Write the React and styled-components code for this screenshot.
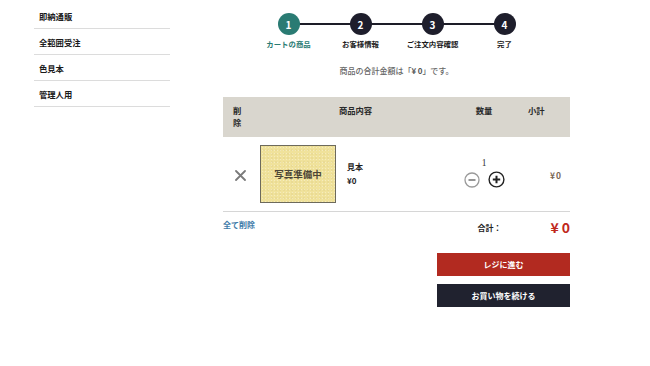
import styled, { createGlobalStyle } from "styled-components";

const GlobalStyle = createGlobalStyle`
  html, body {
    margin: 0;
    padding: 0;
    background: #ffffff;
  }
  body {
    font-family: "Noto Sans CJK JP", "Noto Sans", sans-serif;
    color: #222;
  }
`;

const menu = ["即納通販", "全範囲受注", "色見本", "管理人用"];
const steps = ["カートの商品", "お客様情報", "ご注文内容確認", "完了"];

function XMark() {
  return (
    <svg width="11" height="11" viewBox="0 0 11 11">
      <path d="M1 1 L10 10 M10 1 L1 10" stroke="#7a7a7a" strokeWidth="1.8" strokeLinecap="round" />
    </svg>
  );
}

function MinusIcon() {
  return (
    <svg width="16" height="16" viewBox="0 0 16 16">
      <circle cx="8" cy="8" r="7" fill="none" stroke="#9a9a9a" strokeWidth="1.3" />
      <path d="M4.5 8 H11.5" stroke="#8a8a8a" strokeWidth="1.8" />
    </svg>
  );
}

function PlusIcon() {
  return (
    <svg width="17" height="17" viewBox="0 0 17 17">
      <circle cx="8.5" cy="8.5" r="7.4" fill="none" stroke="#222" strokeWidth="1.4" />
      <path d="M4.8 8.5 H12.2 M8.5 4.8 V12.2" stroke="#222" strokeWidth="2" />
    </svg>
  );
}

function App() {
  return (
    <>
      <GlobalStyle />
      <Page>
        <Sidebar>
          {menu.map((m) => (
            <MenuItem key={m}>{m}</MenuItem>
          ))}
        </Sidebar>
        <Main>
          <Stepper>
            {steps.map((s, i) => (
              <Step key={s} $last={i === steps.length - 1}>
                <Circle $active={i === 0}>{i + 1}</Circle>
                <StepLabel $active={i === 0}>{s}</StepLabel>
              </Step>
            ))}
          </Stepper>
          <Summary>
            商品の合計金額は「<Yen>¥0</Yen>」です。
          </Summary>
          <Table>
            <HeadRow>
              <HeadCell>削<br />除</HeadCell>
              <HeadCell $center>商品内容</HeadCell>
              <HeadCell $center>数量</HeadCell>
              <HeadCell $pad="16px">小計</HeadCell>
            </HeadRow>
            <ItemRow>
              <DeleteCell>
                <XMark />
              </DeleteCell>
              <ProductCell>
                <Photo>写真準備中</Photo>
                <ProductInfo>
                  <span>見本</span>
                  <span>¥0</span>
                </ProductInfo>
              </ProductCell>
              <QtyCell>
                <QtyValue>1</QtyValue>
                <QtyButtons>
                  <MinusIcon />
                  <PlusIcon />
                </QtyButtons>
              </QtyCell>
              <SubtotalCell>¥0</SubtotalCell>
            </ItemRow>
          </Table>
          <FooterRow>
            <ClearLink>全て削除</ClearLink>
            <Total>
              <TotalLabel>合計：</TotalLabel>
              <TotalValue>¥0</TotalValue>
            </Total>
          </FooterRow>
          <Actions>
            <Button $bg="#b22a20">レジに進む</Button>
            <Button $bg="#20222f">お買い物を続ける</Button>
          </Actions>
        </Main>
      </Page>
    </>
  );
}

export default App;

const Page = styled.div`
  display: flex;
  align-items: flex-start;
  padding-left: 34px;
  gap: 53px;
  width: 650px;
  height: 366px;
  box-sizing: border-box;
`;

const Sidebar = styled.div`
  width: 136px;
  padding-top: 3px;
  display: flex;
  flex-direction: column;
`;

const MenuItem = styled.div`
  height: 25px;
  border-bottom: 1.5px solid #dcdcdc;
  display: flex;
  align-items: center;
  padding-left: 5px;
  font-size: 8.3px;
  font-weight: 700;
  color: #1a1a1a;
`;

const Main = styled.div`
  width: 347px;
  padding-top: 13px;
  display: flex;
  flex-direction: column;
`;

const Stepper = styled.div`
  display: flex;
  justify-content: center;
`;

const Step = styled.div`
  position: relative;
  width: 72px;
  display: flex;
  flex-direction: column;
  align-items: center;

  &::after {
    content: "";
    display: ${(p) => (p.$last ? "none" : "block")};
    position: absolute;
    top: 10px;
    left: 36px;
    width: 72px;
    height: 2px;
    background: #1d1d28;
    z-index: 0;
  }
`;

const Circle = styled.div`
  position: relative;
  z-index: 1;
  width: 22px;
  height: 22px;
  border-radius: 50%;
  background: ${(p) => (p.$active ? "#2a7b73" : "#1e1e2c")};
  color: #fff;
  font-size: 10px;
  font-weight: 700;
  display: flex;
  align-items: center;
  justify-content: center;
`;

const StepLabel = styled.div`
  margin-top: 4px;
  font-size: 7.4px;
  line-height: 10px;
  font-weight: 700;
  white-space: nowrap;
  color: ${(p) => (p.$active ? "#2a7b73" : "#1a1a1a")};
`;

const Summary = styled.div`
  margin-top: 17px;
  text-align: center;
  font-size: 8px;
  line-height: 10px;
  color: #666;
  font-weight: 500;
`;

const Yen = styled.span`
  font-weight: 700;
  letter-spacing: 1.5px;
  margin-right: -1.5px;
  color: #555;
`;

const Table = styled.div`
  margin-top: 21px;
  display: flex;
  flex-direction: column;
`;

const HeadRow = styled.div`
  display: grid;
  grid-template-columns: 32px 201px 56px 58px;
  height: 40px;
  background: #d9d6ce;
`;

const HeadCell = styled.div`
  padding-top: 7px;
  padding-left: ${(p) => (p.$center ? "0" : p.$pad || "10px")};
  text-align: ${(p) => (p.$center ? "center" : "left")};
  font-size: 8.3px;
  line-height: 12px;
  font-weight: 700;
  color: #2a2a2a;
`;

const ItemRow = styled.div`
  display: grid;
  grid-template-columns: 32px 201px 56px 58px;
  height: 74px;
  border-bottom: 1px solid #d6d6d6;
  align-items: center;
`;

const DeleteCell = styled.div`
  display: flex;
  justify-content: center;
  padding-left: 2px;
  padding-top: 2px;
`;

const ProductCell = styled.div`
  display: flex;
  align-items: center;
  padding-left: 5px;
  gap: 11px;
`;

const Photo = styled.div`
  width: 74px;
  height: 56px;
  border: 1px solid #6d6a5c;
  background: #f0e29b;
  background-image: radial-gradient(rgba(255, 255, 255, 0.35) 0.6px, transparent 0.8px),
    radial-gradient(rgba(160, 140, 70, 0.18) 0.6px, transparent 0.8px);
  background-size: 3px 3px, 4px 4px;
  background-position: 0 0, 1px 2px;
  display: flex;
  align-items: center;
  justify-content: center;
  font-family: "Liberation Serif", "Noto Sans CJK JP", serif;
  font-size: 9.5px;
  font-weight: 700;
  color: #4c4636;
`;

const ProductInfo = styled.div`
  display: flex;
  flex-direction: column;
  gap: 3px;
  font-size: 8px;
  line-height: 11px;
  font-weight: 700;
  color: #222;
  margin-top: -2px;
`;

const QtyCell = styled.div`
  display: flex;
  flex-direction: column;
  align-items: center;
  gap: 2px;
  margin-top: -2px;
`;

const QtyValue = styled.div`
  font-family: "Liberation Serif", serif;
  font-size: 9.5px;
  line-height: 11px;
  color: #333;
`;

const QtyButtons = styled.div`
  display: flex;
  align-items: center;
  gap: 8px;
`;

const SubtotalCell = styled.div`
  text-align: right;
  padding-right: 8px;
  font-size: 8.5px;
  letter-spacing: 1px;
  color: #7a6654;
  font-weight: 700;
  padding-top: 1px;
`;

const FooterRow = styled.div`
  display: flex;
  justify-content: space-between;
  align-items: flex-start;
  padding-top: 7px;
`;

const ClearLink = styled.a`
  font-size: 8px;
  line-height: 12px;
  font-weight: 700;
  color: #3d7aa8;
  cursor: pointer;
`;

const Total = styled.div`
  display: flex;
  align-items: center;
  margin-top: -2px;
`;

const TotalLabel = styled.span`
  font-size: 8px;
  font-weight: 700;
  color: #222;
  width: 73px;
`;

const TotalValue = styled.span`
  font-size: 14px;
  font-weight: 700;
  letter-spacing: 3px;
  margin-right: -3px;
  color: #c0281c;
`;

const Actions = styled.div`
  margin-top: 16px;
  align-self: flex-end;
  width: 133px;
  display: flex;
  flex-direction: column;
  gap: 8px;
`;

const Button = styled.button`
  height: 23px;
  border: none;
  background: ${(p) => p.$bg};
  color: #fff;
  font-family: "Noto Sans CJK JP", sans-serif;
  font-size: 8px;
  font-weight: 700;
  cursor: pointer;
  padding: 0;
`;
